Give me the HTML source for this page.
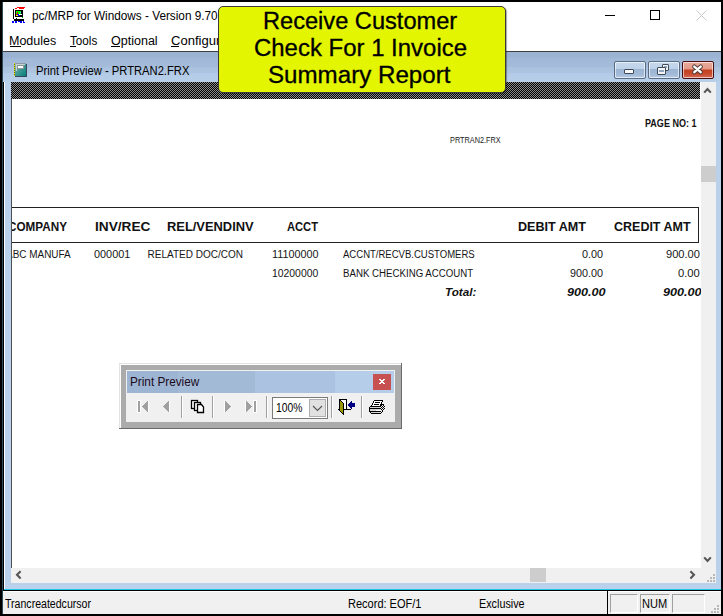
<!DOCTYPE html><html><head><meta charset="utf-8"><style>
html,body{margin:0;padding:0}
html{background:#000}
body{width:723px;height:616px;background:#000;position:relative;overflow:hidden;font-family:"Liberation Sans",sans-serif}
.t{position:absolute;white-space:nowrap;transform-origin:0 0}
.r{position:absolute}
</style></head><body>
<div class="r" style="left:2px;top:2px;width:1px;height:612px;background:#2b4b57;"></div>
<div class="r" style="left:3px;top:2px;width:718px;height:612px;background:#ffffff;"></div>
<svg class="r" style="left:11px;top:7px" width="15" height="17" shape-rendering="crispEdges">
<rect x="6" y="0" width="8" height="1" fill="#f00"/>
<rect x="4" y="1" width="2" height="1" fill="#f00"/><rect x="8" y="1" width="5" height="1" fill="#f00"/>
<rect x="2" y="2" width="1" height="10" fill="#000"/>
<rect x="4" y="3" width="8" height="7" fill="#000"/>
<rect x="5" y="4" width="5" height="3" fill="#0f0"/>
<rect x="9" y="5" width="1" height="1" fill="#4cf"/>
<rect x="6" y="5" width="1" height="2" fill="#f00"/>
<rect x="5" y="7" width="1" height="1" fill="#f00"/><rect x="6" y="7" width="2" height="1" fill="#00f"/>
<rect x="8" y="7" width="3" height="1" fill="#fff"/>
<rect x="5" y="8" width="2" height="1" fill="#ff0"/><rect x="7" y="8" width="2" height="1" fill="#00f"/>
<rect x="11" y="10" width="1" height="1" fill="#0c0"/>
<rect x="5" y="11" width="1" height="1" fill="#000"/>
<rect x="3" y="12" width="10" height="2" fill="#000"/>
<rect x="1" y="14" width="2" height="2" fill="#00f"/><rect x="4" y="14" width="2" height="2" fill="#00f"/>
<rect x="7" y="14" width="2" height="1" fill="#00f"/><rect x="9" y="14" width="2" height="2" fill="#00f"/>
<rect x="12" y="14" width="1" height="2" fill="#00f"/><rect x="13" y="15" width="1" height="1" fill="#00f"/>
</svg>
<div class="t" style="left:32.05px;top:9.74px;font-size:12px;line-height:12px;font-weight:normal;font-style:normal;color:#000;transform:scaleX(0.9813);">pc/MRP for Windows - Version 9.70</div>
<div class="r" style="left:605px;top:15px;width:10px;height:1px;background:#000;"></div>
<div class="r" style="left:650px;top:10px;width:10px;height:10px;background:transparent;border:1px solid #000;box-sizing:border-box;"></div>
<svg class="r" style="left:696px;top:10px" width="11" height="11"><path d="M0.5 0.5 L10.5 10.5 M10.5 0.5 L0.5 10.5" stroke="#c8c8c8" stroke-width="1"/></svg>
<div class="t" style="left:9.08px;top:35.14px;font-size:12px;line-height:12px;font-weight:normal;font-style:normal;color:#000;transform:scaleX(1.0412);">Modules</div>
<div class="r" style="left:10px;top:46px;width:11px;height:1px;background:#000;"></div>
<div class="t" style="left:69.68px;top:35.14px;font-size:12px;line-height:12px;font-weight:normal;font-style:normal;color:#000;transform:scaleX(0.9726);">Tools</div>
<div class="r" style="left:70px;top:46px;width:6px;height:1px;background:#000;"></div>
<div class="t" style="left:110.67px;top:35.14px;font-size:12px;line-height:12px;font-weight:normal;font-style:normal;color:#000;transform:scaleX(1.0438);">Optional</div>
<div class="r" style="left:111px;top:46px;width:9px;height:1px;background:#000;"></div>
<div class="t" style="left:170.58px;top:35.14px;font-size:12px;line-height:12px;font-weight:normal;font-style:normal;color:#000;transform:scaleX(1.0869);">Configure</div>
<div class="r" style="left:171px;top:46px;width:8px;height:1px;background:#000;"></div>
<div class="r" style="left:3px;top:51px;width:718px;height:1px;background:#404040;"></div>
<div class="r" style="left:3px;top:52px;width:718px;height:30px;background:linear-gradient(#99b3d2 0px,#9cb5d4 6px,#a1b9d7 6px,#a4bcd9 15px,#aac2de 15px,#adc5e0 21px,#b3cbe6 21px,#b7cfe9 30px);"></div>
<svg class="r" style="left:14px;top:63px" width="13" height="14" shape-rendering="crispEdges"><defs><linearGradient id="bk" x1="0" y1="0" x2="1" y2="1"><stop offset="0" stop-color="#a8b8b8"/><stop offset="0.45" stop-color="#4a9a96"/><stop offset="1" stop-color="#008078"/></linearGradient></defs><rect x="1" y="0" width="11" height="13" fill="url(#bk)"/><rect x="1" y="0" width="11" height="1" fill="#8a9aa0"/><rect x="2" y="1" width="9" height="1" fill="#c8d0d0"/><rect x="2" y="1" width="1" height="7" fill="#c8d0d0"/><rect x="12" y="1" width="1" height="13" fill="#3a4560"/><rect x="1" y="13" width="12" height="1" fill="#3a4560"/><rect x="3" y="2" width="7" height="4" fill="#8a9a9a"/><rect x="4" y="3" width="5" height="2" fill="#fff"/><rect x="0" y="0" width="1" height="13" fill="#e8e800"/><rect x="0" y="1" width="1" height="1" fill="#707000"/><rect x="0" y="3" width="1" height="1" fill="#707000"/><rect x="0" y="5" width="1" height="1" fill="#707000"/><rect x="0" y="7" width="1" height="1" fill="#707000"/><rect x="0" y="9" width="1" height="1" fill="#707000"/><rect x="0" y="11" width="1" height="1" fill="#707000"/></svg>
<div class="t" style="left:36.17px;top:65.44px;font-size:12px;line-height:12px;font-weight:normal;font-style:normal;color:#000;transform:scaleX(0.9323);">Print Preview - PRTRAN2.FRX</div>
<div class="r" style="left:614px;top:61px;width:30px;height:16px;border:1px solid #586c86;border-radius:2px;background:linear-gradient(#c6d8ec 0px,#bdd1e8 7px,#9cb5d3 7px,#a2bad7 12px,#b4cae4 16px);box-shadow:inset 0 0 0 1px rgba(255,255,255,0.6)"></div>
<div class="r" style="left:648px;top:61px;width:30px;height:16px;border:1px solid #586c86;border-radius:2px;background:linear-gradient(#c6d8ec 0px,#bdd1e8 7px,#9cb5d3 7px,#a2bad7 12px,#b4cae4 16px);box-shadow:inset 0 0 0 1px rgba(255,255,255,0.6)"></div>
<div class="r" style="left:682px;top:61px;width:30px;height:16px;border:1px solid #4a0d12;border-radius:2px;background:linear-gradient(#e9a99b 0px,#e59a8a 7px,#c2401f 8px,#c94a2c 12px,#d5786a 17px);box-shadow:inset 0 0 0 1px rgba(255,255,255,0.6)"></div>
<div class="r" style="left:624px;top:69px;width:10px;height:5px;background:#fafafa;border:1px solid #3d4b5c;border-radius:1px;box-sizing:border-box;"></div>
<div class="r" style="left:662px;top:64px;width:7px;height:7px;background:#f4f4f4;border:1px solid #3d4b5c;border-radius:1px;box-sizing:border-box;"></div>
<div class="r" style="left:664px;top:66px;width:3px;height:2px;background:#8fa6c2;"></div>
<div class="r" style="left:657px;top:67px;width:9px;height:8px;background:#f4f4f4;border:1px solid #3d4b5c;border-radius:1px;box-sizing:border-box;"></div>
<div class="r" style="left:659px;top:70px;width:5px;height:2px;background:#8fa6c2;"></div>
<svg class="r" style="left:0px;top:0px" width="723" height="100"><path d="M694.3 66.6 L700.7 72.2 M700.7 66.6 L694.3 72.2" stroke="#4a3a3a" stroke-width="4.2" stroke-linecap="round"/><path d="M694.3 66.6 L700.7 72.2 M700.7 66.6 L694.3 72.2" stroke="#ffffff" stroke-width="2.4" stroke-linecap="round"/></svg>
<div class="r" style="left:3px;top:82px;width:1px;height:509px;background:#000;"></div>
<div class="r" style="left:4px;top:82px;width:1px;height:507px;background:#fff;"></div>
<div class="r" style="left:5px;top:82px;width:716px;height:507px;background:#b9d1ea;"></div>
<div class="r" style="left:4px;top:589px;width:717px;height:1px;background:#1ec8e6;"></div>
<div class="r" style="left:3px;top:590px;width:718px;height:1px;background:#000;"></div>
<svg class="r" style="left:11px;top:82px" width="690" height="17" shape-rendering="crispEdges"><defs><pattern id="ck" width="2" height="2" patternUnits="userSpaceOnUse"><rect width="2" height="2" fill="#000"/><rect x="1" y="0" width="1" height="1" fill="#8c8c8c"/><rect x="0" y="1" width="1" height="1" fill="#8c8c8c"/></pattern></defs><rect width="689" height="17" fill="url(#ck)"/></svg>
<div class="r" style="left:700px;top:82px;width:1px;height:17px;background:#fff;"></div>
<div class="r" style="left:11px;top:99px;width:1px;height:469px;background:#505050;"></div>
<div class="r" style="left:12px;top:99px;width:689px;height:469px;background:#fff;"></div>
<div class="r" style="left:701px;top:82px;width:15px;height:486px;background:#f0f0f0;"></div>
<div class="r" style="left:701px;top:166px;width:15px;height:16px;background:#cdcdcd;"></div>
<div class="r" style="left:11px;top:568px;width:690px;height:15px;background:#f0f0f0;"></div>
<div class="r" style="left:530px;top:568px;width:16px;height:14px;background:#cdcdcd;"></div>
<div class="r" style="left:701px;top:568px;width:15px;height:15px;background:#f0f0f0;"></div>
<div class="r" style="left:713px;top:574px;width:2px;height:2px;background:#b8b8b8;"></div>
<div class="r" style="left:710px;top:577px;width:2px;height:2px;background:#b8b8b8;"></div>
<div class="r" style="left:713px;top:577px;width:2px;height:2px;background:#b8b8b8;"></div>
<div class="r" style="left:707px;top:580px;width:2px;height:2px;background:#b8b8b8;"></div>
<div class="r" style="left:710px;top:580px;width:2px;height:2px;background:#b8b8b8;"></div>
<div class="r" style="left:713px;top:580px;width:2px;height:2px;background:#b8b8b8;"></div>
<svg class="r" style="left:0px;top:0px" width="723" height="616"><path d="M704.2 92.6 L707.5 89 L710.8 92.6 M704.2 557.4 L707.5 561 L710.8 557.4 M20.6 571.2 L17 574.8 L20.6 578.4 M690.4 571.2 L694 574.8 L690.4 578.4" fill="none" stroke="#555" stroke-width="2.1"/></svg>
<div class="r" style="left:3px;top:591px;width:718px;height:23px;background:#f0f0f0;"></div>
<div class="r" style="left:3px;top:591px;width:718px;height:1px;background:#fff;"></div>
<div class="t" style="left:4.71px;top:598.34px;font-size:12px;line-height:12px;font-weight:normal;font-style:normal;color:#000;transform:scaleX(0.8809);">Trancreatedcursor</div>
<div class="t" style="left:347.69px;top:597.74px;font-size:12px;line-height:12px;font-weight:normal;font-style:normal;color:#000;transform:scaleX(0.9178);">Record: EOF/1</div>
<div class="t" style="left:478.80px;top:597.74px;font-size:12px;line-height:12px;font-weight:normal;font-style:normal;color:#000;transform:scaleX(0.8995);">Exclusive</div>
<div class="r" style="left:607px;top:591px;width:1px;height:23px;background:#000;"></div>
<div class="r" style="left:610px;top:594px;width:28px;height:19px;background:transparent;border-top:1px solid #a0a0a0;border-left:1px solid #a0a0a0;border-right:1px solid #fff;border-bottom:1px solid #fff;box-sizing:border-box;"></div>
<div class="r" style="left:640px;top:594px;width:30px;height:19px;background:transparent;border-top:1px solid #a0a0a0;border-left:1px solid #a0a0a0;border-right:1px solid #fff;border-bottom:1px solid #fff;box-sizing:border-box;"></div>
<div class="r" style="left:672px;top:594px;width:33px;height:19px;background:transparent;border-top:1px solid #a0a0a0;border-left:1px solid #a0a0a0;border-right:1px solid #fff;border-bottom:1px solid #fff;box-sizing:border-box;"></div>
<div class="t" style="left:642.08px;top:597.74px;font-size:12px;line-height:12px;font-weight:normal;font-style:normal;color:#000;transform:scaleX(0.9223);">NUM</div>
<div class="r" style="left:717px;top:605px;width:2px;height:2px;background:#b8b8b8;"></div>
<div class="r" style="left:714px;top:608px;width:2px;height:2px;background:#b8b8b8;"></div>
<div class="r" style="left:717px;top:608px;width:2px;height:2px;background:#b8b8b8;"></div>
<div class="r" style="left:711px;top:611px;width:2px;height:2px;background:#b8b8b8;"></div>
<div class="r" style="left:714px;top:611px;width:2px;height:2px;background:#b8b8b8;"></div>
<div class="r" style="left:717px;top:611px;width:2px;height:2px;background:#b8b8b8;"></div>
<div class="r" style="left:12px;top:99px;width:689px;height:469px;overflow:hidden">
<div class="t" style="left:632.88px;top:19.53px;font-size:10px;line-height:10px;font-weight:bold;font-style:normal;color:#111;transform:scaleX(0.9026);">PAGE NO: 1</div>
<div class="t" style="left:438.39px;top:36.62px;font-size:8.6px;line-height:8.6px;font-weight:normal;font-style:normal;color:#1a1a1a;transform:scaleX(0.8519);">PRTRAN2.FRX</div>
<div class="r" style="left:0px;top:108px;width:686px;height:1px;background:#222;"></div>
<div class="r" style="left:0px;top:143px;width:686px;height:1px;background:#222;"></div>
<div class="r" style="left:686px;top:108px;width:1px;height:36px;background:#222;"></div>
<div class="t" style="left:-3.52px;top:121.54px;font-size:12px;line-height:12px;font-weight:bold;font-style:normal;color:#111;transform:scaleX(0.9754);">COMPANY</div>
<div class="t" style="left:83.12px;top:121.54px;font-size:12px;line-height:12px;font-weight:bold;font-style:normal;color:#111;transform:scaleX(1.1385);">INV/REC</div>
<div class="t" style="left:154.87px;top:121.54px;font-size:12px;line-height:12px;font-weight:bold;font-style:normal;color:#111;transform:scaleX(1.0738);">REL/VENDINV</div>
<div class="t" style="left:274.94px;top:121.54px;font-size:12px;line-height:12px;font-weight:bold;font-style:normal;color:#111;transform:scaleX(0.9292);">ACCT</div>
<div class="t" style="left:506.19px;top:121.54px;font-size:12px;line-height:12px;font-weight:bold;font-style:normal;color:#111;transform:scaleX(1.0484);">DEBIT AMT</div>
<div class="t" style="left:602.44px;top:121.54px;font-size:12px;line-height:12px;font-weight:bold;font-style:normal;color:#111;transform:scaleX(1.0412);">CREDIT AMT</div>
<div class="t" style="left:-5.75px;top:151.33px;font-size:10px;line-height:10px;font-weight:normal;font-style:normal;color:#151515;transform:scaleX(0.9951);">ABC MANUFA</div>
<div class="t" style="left:82.05px;top:151.33px;font-size:10px;line-height:10px;font-weight:normal;font-style:normal;color:#151515;transform:scaleX(1.0873);">000001</div>
<div class="t" style="left:135.51px;top:151.33px;font-size:10px;line-height:10px;font-weight:normal;font-style:normal;color:#151515;">RELATED DOC/CON</div>
<div class="t" style="left:259.90px;top:151.33px;font-size:10px;line-height:10px;font-weight:normal;font-style:normal;color:#151515;transform:scaleX(1.0790);">11100000</div>
<div class="t" style="left:259.94px;top:169.83px;font-size:10px;line-height:10px;font-weight:normal;font-style:normal;color:#151515;transform:scaleX(1.0386);">10200000</div>
<div class="t" style="left:331.47px;top:151.33px;font-size:10px;line-height:10px;font-weight:normal;font-style:normal;color:#151515;transform:scaleX(0.9532);">ACCNT/RECVB.CUSTOMERS</div>
<div class="t" style="left:331.03px;top:169.83px;font-size:10px;line-height:10px;font-weight:normal;font-style:normal;color:#151515;transform:scaleX(0.9685);">BANK CHECKING ACCOUNT</div>
<div class="t" style="left:433.08px;top:188.53px;font-size:10px;line-height:10px;font-weight:bold;font-style:italic;color:#111;transform:scaleX(1.1658);">Total:</div>
<div class="t" style="left:569.95px;top:151.33px;font-size:10px;line-height:10px;font-weight:normal;font-style:normal;color:#151515;transform:scaleX(1.0829);">0.00</div>
<div class="t" style="left:653.76px;top:151.33px;font-size:10px;line-height:10px;font-weight:normal;font-style:normal;color:#151515;transform:scaleX(1.1085);">900.00</div>
<div class="t" style="left:558.18px;top:169.83px;font-size:10px;line-height:10px;font-weight:normal;font-style:normal;color:#151515;transform:scaleX(1.0782);">900.00</div>
<div class="t" style="left:665.73px;top:169.83px;font-size:10px;line-height:10px;font-weight:normal;font-style:normal;color:#151515;transform:scaleX(1.1203);">0.00</div>
<div class="t" style="left:554.58px;top:188.53px;font-size:10px;line-height:10px;font-weight:bold;font-style:italic;color:#111;transform:scaleX(1.2617);">900.00</div>
<div class="t" style="left:650.58px;top:188.53px;font-size:10px;line-height:10px;font-weight:bold;font-style:italic;color:#111;transform:scaleX(1.2617);">900.00</div>
</div>
<div class="r" style="left:119px;top:363px;width:283px;height:66px;background:#ababab;border-top:1px solid #e3e3e3;border-left:1px solid #e3e3e3;box-sizing:border-box;"></div>
<div class="r" style="left:120px;top:364px;width:281px;height:1px;background:#fff;"></div>
<div class="r" style="left:120px;top:364px;width:1px;height:64px;background:#fff;"></div>
<div class="r" style="left:401px;top:363px;width:1px;height:66px;background:#6a6a6a;"></div>
<div class="r" style="left:119px;top:428px;width:283px;height:1px;background:#6a6a6a;"></div>
<div class="r" style="left:126px;top:370px;width:269px;height:52px;background:#f0f0f0;"></div>
<div class="r" style="left:127px;top:371px;width:267px;height:22px;background:linear-gradient(90deg,#9db4d2 0px,#9db4d2 51px,#a3bad7 51px,#a3bad7 128px,#abc3e0 128px,#abc3e0 208px,#b5cde8 208px);"></div>
<div class="t" style="left:129.53px;top:376.44px;font-size:12px;line-height:12px;font-weight:normal;font-style:normal;color:#1a0a1a;transform:scaleX(0.9795);">Print Preview</div>
<div class="r" style="left:373px;top:374px;width:18px;height:16px;background:#c75050;"></div>
<svg class="r" style="left:0px;top:0px" width="723" height="616" shape-rendering="crispEdges"><rect x="379" y="379" width="1" height="1" fill="#fff"/><rect x="380" y="379" width="1" height="1" fill="#fff"/><rect x="383" y="379" width="1" height="1" fill="#fff"/><rect x="384" y="379" width="1" height="1" fill="#fff"/><rect x="380" y="380" width="1" height="1" fill="#fff"/><rect x="381" y="380" width="1" height="1" fill="#fff"/><rect x="382" y="380" width="1" height="1" fill="#fff"/><rect x="383" y="380" width="1" height="1" fill="#fff"/><rect x="381" y="381" width="1" height="1" fill="#fff"/><rect x="382" y="381" width="1" height="1" fill="#fff"/><rect x="380" y="382" width="1" height="1" fill="#fff"/><rect x="381" y="382" width="1" height="1" fill="#fff"/><rect x="382" y="382" width="1" height="1" fill="#fff"/><rect x="383" y="382" width="1" height="1" fill="#fff"/><rect x="379" y="383" width="1" height="1" fill="#fff"/><rect x="380" y="383" width="1" height="1" fill="#fff"/><rect x="383" y="383" width="1" height="1" fill="#fff"/><rect x="384" y="383" width="1" height="1" fill="#fff"/></svg>
<svg class="r" style="left:0px;top:0px" width="723" height="616" shape-rendering="crispEdges"><rect x="137" y="400" width="4" height="13" fill="#fff"/><rect x="253" y="400" width="4" height="13" fill="#fff"/><rect x="138" y="401" width="2" height="11" fill="#a0a0a0"/><rect x="254" y="401" width="2" height="11" fill="#a0a0a0"/><rect x="148" y="401" width="1" height="11" fill="#fff"/><rect x="147" y="402" width="1" height="9" fill="#fff"/><rect x="146" y="403" width="1" height="7" fill="#fff"/><rect x="145" y="404" width="1" height="5" fill="#fff"/><rect x="144" y="405" width="1" height="3" fill="#fff"/><rect x="143" y="406" width="1" height="1" fill="#fff"/><rect x="142" y="407" width="1" height="-1" fill="#fff"/><rect x="169" y="401" width="1" height="11" fill="#fff"/><rect x="168" y="402" width="1" height="9" fill="#fff"/><rect x="167" y="403" width="1" height="7" fill="#fff"/><rect x="166" y="404" width="1" height="5" fill="#fff"/><rect x="165" y="405" width="1" height="3" fill="#fff"/><rect x="164" y="406" width="1" height="1" fill="#fff"/><rect x="163" y="407" width="1" height="-1" fill="#fff"/><rect x="224" y="401" width="1" height="11" fill="#fff"/><rect x="225" y="402" width="1" height="9" fill="#fff"/><rect x="226" y="403" width="1" height="7" fill="#fff"/><rect x="227" y="404" width="1" height="5" fill="#fff"/><rect x="228" y="405" width="1" height="3" fill="#fff"/><rect x="229" y="406" width="1" height="1" fill="#fff"/><rect x="230" y="407" width="1" height="-1" fill="#fff"/><rect x="245" y="401" width="1" height="11" fill="#fff"/><rect x="246" y="402" width="1" height="9" fill="#fff"/><rect x="247" y="403" width="1" height="7" fill="#fff"/><rect x="248" y="404" width="1" height="5" fill="#fff"/><rect x="249" y="405" width="1" height="3" fill="#fff"/><rect x="250" y="406" width="1" height="1" fill="#fff"/><rect x="251" y="407" width="1" height="-1" fill="#fff"/><rect x="147" y="401" width="1" height="11" fill="#a0a0a0"/><rect x="146" y="402" width="1" height="9" fill="#a0a0a0"/><rect x="145" y="403" width="1" height="7" fill="#a0a0a0"/><rect x="144" y="404" width="1" height="5" fill="#a0a0a0"/><rect x="143" y="405" width="1" height="3" fill="#a0a0a0"/><rect x="142" y="406" width="1" height="1" fill="#a0a0a0"/><rect x="168" y="401" width="1" height="11" fill="#a0a0a0"/><rect x="167" y="402" width="1" height="9" fill="#a0a0a0"/><rect x="166" y="403" width="1" height="7" fill="#a0a0a0"/><rect x="165" y="404" width="1" height="5" fill="#a0a0a0"/><rect x="164" y="405" width="1" height="3" fill="#a0a0a0"/><rect x="163" y="406" width="1" height="1" fill="#a0a0a0"/><rect x="225" y="401" width="1" height="11" fill="#a0a0a0"/><rect x="226" y="402" width="1" height="9" fill="#a0a0a0"/><rect x="227" y="403" width="1" height="7" fill="#a0a0a0"/><rect x="228" y="404" width="1" height="5" fill="#a0a0a0"/><rect x="229" y="405" width="1" height="3" fill="#a0a0a0"/><rect x="230" y="406" width="1" height="1" fill="#a0a0a0"/><rect x="246" y="401" width="1" height="11" fill="#a0a0a0"/><rect x="247" y="402" width="1" height="9" fill="#a0a0a0"/><rect x="248" y="403" width="1" height="7" fill="#a0a0a0"/><rect x="249" y="404" width="1" height="5" fill="#a0a0a0"/><rect x="250" y="405" width="1" height="3" fill="#a0a0a0"/><rect x="251" y="406" width="1" height="1" fill="#a0a0a0"/></svg>
<div class="r" style="left:181px;top:396px;width:1px;height:22px;background:#a0a0a0;"></div>
<div class="r" style="left:182px;top:396px;width:1px;height:22px;background:#ffffff;"></div>
<div class="r" style="left:212px;top:396px;width:1px;height:22px;background:#a0a0a0;"></div>
<div class="r" style="left:213px;top:396px;width:1px;height:22px;background:#ffffff;"></div>
<div class="r" style="left:266px;top:396px;width:1px;height:22px;background:#a0a0a0;"></div>
<div class="r" style="left:267px;top:396px;width:1px;height:22px;background:#ffffff;"></div>
<div class="r" style="left:331px;top:396px;width:1px;height:22px;background:#a0a0a0;"></div>
<div class="r" style="left:332px;top:396px;width:1px;height:22px;background:#ffffff;"></div>
<div class="r" style="left:361px;top:396px;width:1px;height:22px;background:#a0a0a0;"></div>
<div class="r" style="left:362px;top:396px;width:1px;height:22px;background:#ffffff;"></div>
<svg class="r" style="left:189px;top:398px" width="18" height="17"><rect x="2.5" y="2.5" width="6" height="8" fill="#fff" stroke="#000" stroke-width="1.3"/><rect x="5.5" y="4.5" width="6" height="8" fill="#fff" stroke="#000" stroke-width="1.3"/><path d="M8.5 6.5 L12.5 6.5 L14.5 9 L14.5 14.5 L8.5 14.5 Z" fill="#fff" stroke="#000" stroke-width="1.3"/></svg>
<div class="r" style="left:272px;top:397px;width:56px;height:22px;background:#fff;border:1px solid #7a7a7a;box-sizing:border-box;"></div>
<div class="t" style="left:275.97px;top:401.54px;font-size:12px;line-height:12px;font-weight:normal;font-style:normal;color:#000;transform:scaleX(0.8587);">100%</div>
<div class="r" style="left:309px;top:399px;width:17px;height:18px;background:#e1e1e1;border:1px solid #adadad;box-sizing:border-box;"></div>
<svg class="r" style="left:312px;top:405px" width="11" height="7"><path d="M1 1 L5.5 5.5 L10 1" fill="none" stroke="#555" stroke-width="1.1"/></svg>
<svg class="r" style="left:0px;top:0px" width="723" height="616" shape-rendering="crispEdges"><rect x="339" y="399" width="8" height="1" fill="#000"/><rect x="346" y="399" width="1" height="11" fill="#000"/><rect x="338" y="409" width="13" height="1" fill="#000"/><rect x="340" y="400" width="6" height="9" fill="#fff"/><rect x="339" y="399" width="1" height="12" fill="#000"/><rect x="340" y="400" width="1" height="1" fill="#000"/><rect x="340" y="401" width="1" height="10" fill="#9a9a00"/><rect x="340" y="411" width="1" height="1" fill="#000"/><rect x="341" y="401" width="1" height="1" fill="#000"/><rect x="341" y="402" width="1" height="10" fill="#9a9a00"/><rect x="341" y="412" width="1" height="1" fill="#000"/><rect x="342" y="402" width="1" height="1" fill="#000"/><rect x="342" y="403" width="1" height="10" fill="#9a9a00"/><rect x="342" y="413" width="1" height="1" fill="#000"/><rect x="343" y="403" width="1" height="12" fill="#000"/><rect x="348" y="404" width="1" height="2" fill="#000080"/><rect x="349" y="403" width="1" height="4" fill="#000080"/><rect x="350" y="402" width="1" height="6" fill="#000080"/><rect x="351" y="401" width="1" height="8" fill="#000080"/><rect x="352" y="403" width="3" height="4" fill="#000080"/></svg>
<svg class="r" style="left:0px;top:0px" width="723" height="616" shape-rendering="crispEdges"><rect x="374" y="400" width="9" height="1" fill="#000"/><rect x="382" y="401" width="1" height="1" fill="#000"/><rect x="373" y="401" width="1" height="2" fill="#000"/><rect x="372" y="403" width="1" height="2" fill="#000"/><rect x="371" y="405" width="1" height="1" fill="#000"/><rect x="374" y="401" width="8" height="1" fill="#fff"/><rect x="374" y="402" width="7" height="2" fill="#fff"/><rect x="373" y="403" width="8" height="1" fill="#fff"/><rect x="373" y="404" width="7" height="2" fill="#fff"/><rect x="375" y="402" width="5" height="1" fill="#000"/><rect x="374" y="404" width="5" height="1" fill="#000"/><rect x="381" y="402" width="1" height="2" fill="#000"/><rect x="380" y="404" width="1" height="2" fill="#000"/><rect x="370" y="406" width="11" height="1" fill="#000"/><rect x="369" y="407" width="1" height="5" fill="#000"/><rect x="370" y="412" width="1" height="1" fill="#000"/><rect x="370" y="407" width="10" height="1" fill="#d4d4d4"/><rect x="370" y="408" width="11" height="1" fill="#000"/><rect x="370" y="409" width="11" height="2" fill="#d4d4d4"/><rect x="376" y="410" width="5" height="1" fill="#fff"/><rect x="370" y="411" width="11" height="1" fill="#000"/><rect x="371" y="412" width="9" height="1" fill="#d4d4d4"/><rect x="371" y="413" width="10" height="1" fill="#000"/><rect x="381" y="405" width="1" height="1" fill="#000"/><rect x="383" y="405" width="1" height="1" fill="#000"/><rect x="382" y="406" width="1" height="1" fill="#000"/><rect x="384" y="406" width="1" height="1" fill="#000"/><rect x="381" y="407" width="1" height="1" fill="#000"/><rect x="383" y="407" width="1" height="1" fill="#000"/><rect x="384" y="408" width="1" height="1" fill="#000"/><rect x="382" y="408" width="1" height="1" fill="#000"/><rect x="381" y="409" width="1" height="1" fill="#000"/><rect x="383" y="409" width="1" height="1" fill="#000"/><rect x="382" y="410" width="1" height="1" fill="#000"/><rect x="382" y="411" width="1" height="1" fill="#000"/><rect x="381" y="412" width="1" height="1" fill="#000"/><rect x="380" y="413" width="1" height="1" fill="#000"/><rect x="381" y="404" width="3" height="1" fill="#000"/></svg>
<div class="r" style="left:218px;top:6px;width:288px;height:87px;box-sizing:border-box;border:1px solid #3a3a3a;border-radius:5px;background:#e3f500;box-shadow:1px 1px 1px rgba(0,0,0,0.35)"></div>
<div class="t" style="left:262.72px;top:9.73px;font-size:23px;line-height:23px;font-weight:normal;font-style:normal;color:#000;transform:scaleX(1.0265);-webkit-text-stroke:0.3px #000;">Receive Customer</div>
<div class="t" style="left:253.50px;top:37.13px;font-size:23px;line-height:23px;font-weight:normal;font-style:normal;color:#000;transform:scaleX(1.0414);-webkit-text-stroke:0.3px #000;">Check For 1 Invoice</div>
<div class="t" style="left:268.38px;top:63.73px;font-size:23px;line-height:23px;font-weight:normal;font-style:normal;color:#000;transform:scaleX(1.0493);-webkit-text-stroke:0.3px #000;">Summary Report</div>
</body></html>
